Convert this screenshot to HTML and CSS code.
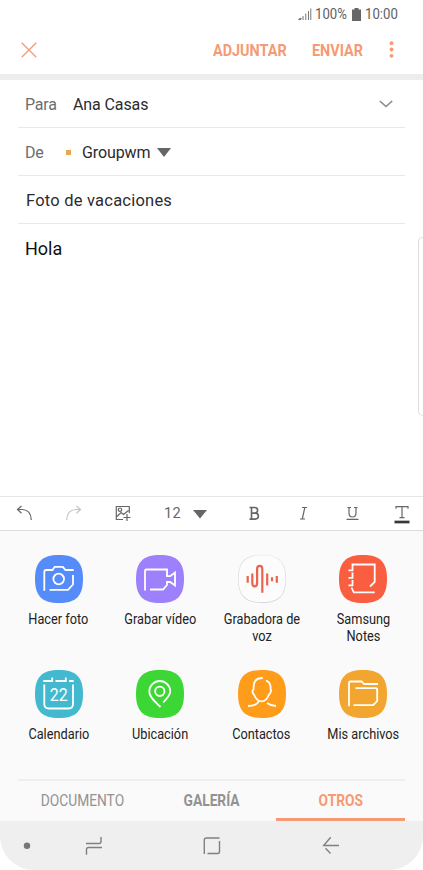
FILE: index.html
```html
<!DOCTYPE html>
<html lang="es">
<head>
<meta charset="utf-8">
<title>Correo</title>
<link rel="stylesheet" href="styles.css">
</head>
<body>
<svg class="defs" aria-hidden="true"><defs><path id="tile" d="M24 0C41 0 48 7 48 24S41 48 24 48 0 41 0 24 7 0 24 0Z"/></defs></svg>
<div class="phone">
  <div class="status">
    <svg width="14" height="14" viewBox="0 0 14 14"><path d="M.5 12.500l2.500-1.500v1.500zM5 9v4M7.800 6.500v6.500M10.500 4v9M12.800 1.500V13" fill="#777" stroke="#777" stroke-width="1"/></svg>
    <span class="percent"><span class="cond">100%</span></span>
    <svg class="battery" width="9" height="13" viewBox="0 0 9 13"><path d="M2.500 0h4v1.500H9V13H0V1.500h2.500z" fill="#666"/></svg>
    <span class="clock"><span class="cond">10:00</span></span>
  </div>
  <header class="header">
    <svg class="close" width="16" height="16" viewBox="0 0 16 16"><path d="M.7.700l14.600 14.600M15.300.700.700 15.300" stroke="#f59a74" stroke-width="1.300"/></svg>
    <span class="action attach"><span class="cond">ADJUNTAR</span></span>
    <span class="action send"><span class="cond">ENVIAR</span></span>
    <svg class="more" width="5" height="17" viewBox="0 0 5 17"><g fill="#f59a74"><circle cx="2.500" cy="2.200" r="1.900"/><circle cx="2.500" cy="8.500" r="1.900"/><circle cx="2.500" cy="14.800" r="1.900"/></g></svg>
  </header>
  <main class="compose">
    <div class="row"><span class="label para">Para</span><span class="value">Ana Casas</span>
      <svg class="chevron" width="14" height="8" viewBox="0 0 14 8"><path d="M.8 1 7 6.500 13.200 1" fill="none" stroke="#888" stroke-width="1.600"/></svg></div>
    <div class="row"><span class="label de">De</span><i class="marker"></i><span class="value">Groupwm</span>
      <svg class="drop" width="14" height="9" viewBox="0 0 14 9"><path d="M0 0h14L7 9z" fill="#666"/></svg></div>
    <div class="row subject">Foto de vacaciones</div>
    <div class="body">Hola</div>
    <div class="edge"></div>
  </main>
  <div class="tools">
    <svg width="423" height="34" viewBox="0 497 423 34" fill="none" stroke="#666" stroke-width="1.200">
      <path d="M21.500 506l-4 3.500 4 3.700M18 509.500h4.500q8.500.500 8.800 10.500"/>
      <path d="M76.500 506l4 3.500-4 3.700M80 509.500h-4.500q-8.500.500-8.800 10.500" stroke="#c4c4c4"/>
      <path d="M123 519.500h-6.700v-13h13v6.500M117 516.500l4-4 2.500 2 5-4M127 514v7M123.500 517.500h7"/><circle cx="120" cy="509.700" r="1.700"/>
      <path d="M193 510h14l-7 8.500z" fill="#666" stroke="none"/>
      <path d="M249.500 507.500h5.200q2.900 0 2.900 2.800t-2.900 2.800h-3.500 4q3.200 0 3.200 3t-3.200 3h-5.700M251.500 507.500v11.600" stroke-width="1.600"/>
      <path d="M302 507.500h5M300 519h5M304.800 507.500l-2.500 11.500"/>
      <path d="M347.500 507.500h3.500M354 507.500h3.500M349 507.500v5.500q0 4 3.500 4t3.500-4v-5.500M346.500 519.300h12"/>
      <path d="M396 508.700v-2h12v2M402 506.700v11M399.500 517.700h5"/>
      <path d="M394.500 522h15" stroke="#383838" stroke-width="2.700"/>
    </svg>
    <span class="size">12</span>
  </div>
  <section class="panel">
    <div class="apps">
      <div class="app"><svg class="icon" viewBox="0 0 48 48"><use href="#tile" fill="#568cfa"/><path d="M9.300 35.800V17q0-2 2-2h6.200l2.200-3.200h8.100l2.700 3.200h8.200M38 20v9.500l-5 5.300H14.500"/><circle cx="23.700" cy="24" r="5.300"/></svg><div class="name"><span class="cond">Hacer foto</span></div></div>
      <div class="app"><svg class="icon" viewBox="0 0 48 48"><use href="#tile" fill="#9c80fc"/><path d="M9 35.500V16q0-1.500 1.500-1.500H31v6.700h3.200l4.800-3.700v13L34.200 27H31v3l-4 4.500H14"/></svg><div class="name"><span class="cond">Grabar vídeo</span></div></div>
      <div class="app"><svg class="icon voice" viewBox="0 0 48 48"><use href="#tile" fill="#d8d8d8"/><use href="#tile" fill="#fcfcfc" transform="translate(.6 .3) scale(.975)"/><path d="M9.700 21v6.700M14.300 18.500V28c0 4.500 4.800 4.500 4.800 0V14c0-4.300 5.200-4.300 5.200 0v23.800M29.200 18.500v12M34 22.200v4M38.800 21v6.700"/></svg><div class="name"><span class="cond">Grabadora de<br>voz</span></div></div>
      <div class="app"><svg class="icon" viewBox="0 0 48 48"><use href="#tile" fill="#f95e40"/><path d="M9.500 15.300h4V9.500h22.200v17.300L31 31.500M13.500 17.500v5.300h-4M13.500 25v5.300h-4M12.500 32.700l2.300 4.600h20.900"/></svg><div class="name"><span class="cond">Samsung<br>Notes</span></div></div>
      <div class="app"><svg class="icon" viewBox="0 0 48 48"><use href="#tile" fill="#43b9cf"/><path d="M8.300 11h8.900V7.500M20.500 11H30.800V7.500M34 11h4.700M9.300 14.500V34q0 4.500 4.500 4.500h19.700q4.500 0 4.500-4.500V14.500"/><text class="day" x="14.700" y="31.200" textLength="18" lengthAdjust="spacingAndGlyphs">22</text></svg><div class="name"><span class="cond">Calendario</span></div></div>
      <div class="app"><svg class="icon" viewBox="0 0 48 48"><use href="#tile" fill="#3dd735"/><path d="M27.200 32.500C31.500 28 34.300 25 34.300 21.500a10.500 10.500 0 0 0-21 0C13.300 27 18.500 31 24.500 37"/><circle cx="23.800" cy="21.300" r="4.700"/></svg><div class="name"><span class="cond">Ubicación</span></div></div>
      <div class="app"><svg class="icon" viewBox="0 0 48 48"><use href="#tile" fill="#ff9c1a"/><path d="M24.800 8C17 8 15.500 12 15.500 19.500q-2.500 1.500 1 6C18 29 20 31.300 23.800 31.300S29 29 30.500 25.500c3-3.500 3.500-5 2-6.500.5-4-1-7-4.500-8.500M20.500 30c.5 4-5 6-10.500 6M29 33q4 3 9 3"/></svg><div class="name"><span class="cond">Contactos</span></div></div>
      <div class="app"><svg class="icon" viewBox="0 0 48 48"><use href="#tile" fill="#f2a62f"/><path d="M10 36.300V13q0-1.500 1.500-1.500h11.200L25 14h14M16.500 18.200H36.500q1.700 0 1.700 1.700V31l-4 4.200H14.500"/></svg><div class="name"><span class="cond">Mis archivos</span></div></div>
    </div>
    <nav class="tabs">
      <div class="tab doc"><span class="cond">DOCUMENTO</span></div>
      <div class="tab bold"><span class="cond">GALERÍA</span></div>
      <div class="tab bold active"><span class="cond">OTROS</span></div>
    </nav>
  </section>
  <footer class="navbar">
    <svg width="423" height="49" viewBox="0 821 423 49" fill="none" stroke="#808080" stroke-width="1.400">
      <circle cx="27" cy="845.700" r="3.200" fill="#777" stroke="none"/>
      <path d="M86 843.500h13q2 0 2-2V837M102 847.500H88.500q-2 0-2 2v5.300"/>
      <path d="M204.300 854v-14q0-2 2-2h13.200M219.500 841v10.500q0 2-2 2H207.500"/>
      <path d="M339 845.500h-15.300l7-8.300M325.500 848.200l5 5.300"/>
    </svg>
  </footer>
</div>
</body>
</html>
```

FILE: styles.css
```css
* { box-sizing: border-box; }
body { margin: 0; background: #fff; font-family: Roboto, "Liberation Sans", sans-serif; }
svg { display: block; flex: none; }
.defs { position: absolute; width: 0; height: 0; }
.phone { width: 423px; height: 870px; display: flex; flex-direction: column; overflow: hidden; }
.cond { display: inline-block; transform: scaleX(.86); transform-origin: center; white-space: nowrap; }
.status { height: 28px; padding-left: 298px; display: flex; align-items: center; color: #606060; font-size: 15.500px; }
.percent, .clock { white-space: nowrap; }
.percent .cond, .clock .cond, .action .cond { transform-origin: left; }
.percent { width: 37px; margin-left: 3px; }
.percent .cond { transform: scaleX(.85); }
.clock { margin-left: 4px; }
.clock .cond { transform: scaleX(.85); }
.header { height: 46px; display: flex; align-items: center; padding: 0 0 3px 21px; }
.action { color: #f59a74; font-size: 17px; font-weight: 700; white-space: nowrap; }
.action .cond { transform: scaleX(.848); }
.attach { width: 99px; margin-left: 175.500px; }
.send { width: 77px; }
.compose { height: 422px; border-top: 6px solid #ededed; padding: 0 18px; position: relative; }
.row { height: 48px; border-bottom: 1px solid #e9e9e9; display: flex; align-items: center; font-size: 16px; color: #2c2c2c; padding: 1px 12px 0 7px; }
.value { letter-spacing: -.1px; }
.label { color: #6d6d6d; letter-spacing: -.2px; }
.para { width: 48px; }
.de { width: 41px; }
.marker { width: 5px; height: 5px; background: #e6a94f; margin-right: 11px; }
.chevron { margin-left: auto; }
.drop { margin-left: 7px; }
.subject { font-size: 16.500px; letter-spacing: .22px; padding-left: 8px; }
.body { padding: 14px 7px; font-size: 18px; line-height: 21px; color: #111; }
.edge { position: absolute; top: 157px; right: 0; width: 5px; height: 179px; border: 1px solid #dedede; border-right: 0; border-radius: 5px 0 0 5px; }
.tools { height: 35px; border-top: 1px solid #e7e7e7; border-bottom: 1px solid #dcdcdc; position: relative; }
.size { position: absolute; left: 164px; top: 8px; font-size: 14.500px; letter-spacing: .3px; line-height: 18px; color: #666; }
.panel { height: 290px; background: #fafafa; padding: 24px 9px 0; display: flex; flex-direction: column; }
.apps { height: 225px; width: 406px; margin-left: -1px; display: grid; grid-template-columns: repeat(4, 1fr); grid-template-rows: 115px 110px; }
.app { display: flex; flex-direction: column; align-items: center; }
.icon { width: 48px; height: 48px; fill: none; stroke: #fff; stroke-width: 1.800; }
.icon use { stroke: none; }
.voice { stroke: #ed624d; stroke-width: 2.200; }
.day { font-size: 18px; fill: #fff; stroke: none; font-weight: 400; }
.name { margin-top: 8px; font-size: 15px; line-height: 17px; color: #222; text-align: center; }
.name .cond { transform: scaleX(.85); }
.tabs { width: 387px; height: 42px; margin: -1px 0 0 9px; display: grid; grid-template-columns: repeat(3, 1fr); border-top: 2px solid #efefef; }
.tab { display: flex; align-items: center; justify-content: center; font-size: 16px; color: #929292; padding-bottom: 1px; }
.bold { font-weight: 700; }
.active { color: #f59a74; border-bottom: 3px solid #f59a74; padding-top: 2px; padding-bottom: 0; }
.navbar { height: 49px; background: #efefef; border-radius: 0 0 34px 34px; }
```
